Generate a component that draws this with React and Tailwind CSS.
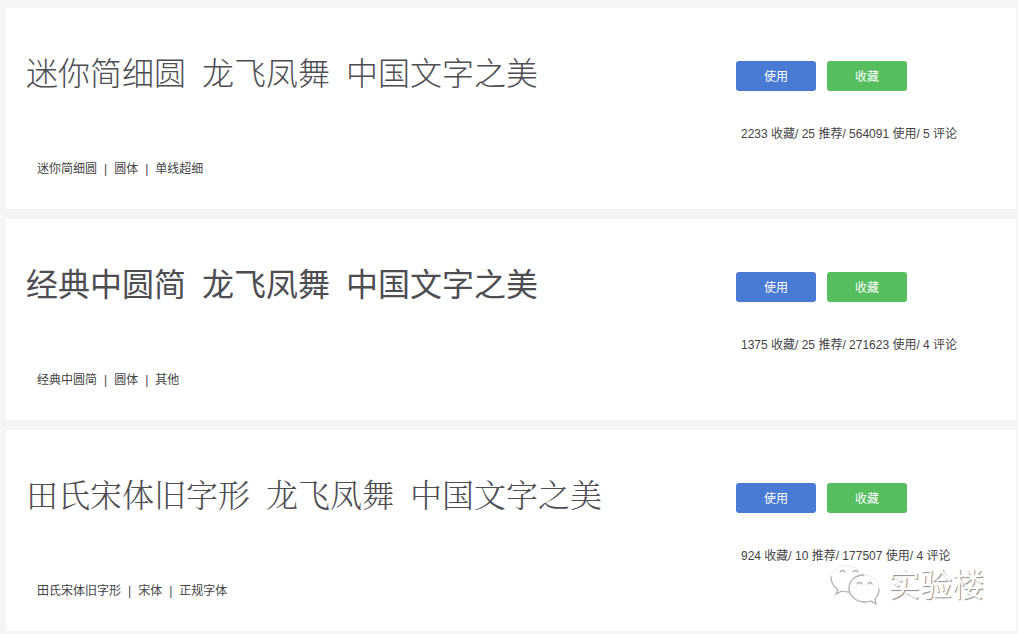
const fonts = [
  {
    name: '迷你简细圆',
    tags: ['圆体', '单线超细'],
    weight: 'font-light',
    stats: [['2233', '收藏'], ['25', '推荐'], ['564091', '使用'], ['5', '评论']],
  },
  {
    name: '经典中圆简',
    tags: ['圆体', '其他'],
    weight: 'font-normal',
    stats: [['1375', '收藏'], ['25', '推荐'], ['271623', '使用'], ['4', '评论']],
  },
  {
    name: '田氏宋体旧字形',
    tags: ['宋体', '正规字体'],
    weight: 'font-light font-["Liberation_Sans","Noto_Serif_CJK_SC","Noto_Sans_CJK_SC",serif]',
    stats: [['924', '收藏'], ['10', '推荐'], ['177507', '使用'], ['4', '评论']],
  },
];

function Watermark() {
  return (
    <div className="pointer-events-none absolute right-8 bottom-[26px] flex items-center gap-2">
      <svg className="h-10 w-[50px]" viewBox="0 0 50 40" fill="none" strokeLinecap="round" aria-hidden="true">
        <g stroke="#ececec" strokeWidth="1">
          <path d="M1 12C2 5 9 1 17 1s15 4 17 11" />
          <path d="M35 10c8 0 14 6 14 13" />
        </g>
        <g stroke="#b0b0b0" strokeWidth="1.3">
          <path d="M1 12c0 6 3 10 7 13l-2 4 6-3c3 1 5 1 7 1" />
          <path d="M34 10c-9 0-15 6-15 13 0 8 7 14 16 14 2 0 4 0 6-1l5 3-1-5c3-3 4-6 4-10" />
          <path d="M10 7c1-2 4-2 5 0M23 7c1-2 4-2 5 0M27 19c1-2 4-2 5 0M38 19c1-2 3-2 4 0" />
        </g>
      </svg>
      <span className="text-[32px] leading-10 text-white [text-shadow:1px_1px_1px_#8c8c8c]">实验楼</span>
    </div>
  );
}

function FontCard({ font, children }) {
  return (
    <article className="relative flex min-h-[201px] justify-between bg-white">
      <div className="flex flex-col items-start gap-[60px] pt-[46px] pl-5">
        <h2 className={`flex gap-4 text-[32px] leading-10 text-[#4d4d52] ${font.weight}`}>
          <span>{font.name}</span>
          <span>龙飞凤舞</span>
          <span>中国文字之美</span>
        </h2>
        <p className="flex gap-[7px] pl-[11px] text-xs leading-[30px] text-[#444]">
          <span>{font.name}</span>
          {font.tags.map((tag) => (
            <span key={tag} className="flex gap-[7px]">
              <span>|</span>
              <span>{tag}</span>
            </span>
          ))}
        </p>
      </div>
      <div className="w-[280px] shrink-0 pt-[53px]">
        <div className="flex gap-[11px]">
          <button type="button" className="h-[30px] w-20 rounded-[3px] bg-[#4a7bd4] pt-0.5 text-xs text-white">使用</button>
          <button type="button" className="h-[30px] w-20 rounded-[3px] bg-[#56be5e] pt-0.5 text-xs text-white">收藏</button>
        </div>
        <p className="mt-[33px] pl-[5px] text-xs leading-5 text-[#444]">
          {font.stats.map(([count, label]) => `${count} ${label}`).join('/ ')}
        </p>
      </div>
      {children}
    </article>
  );
}

export default function App() {
  return (
    <main className="flex min-h-screen flex-col gap-2.5 bg-[#f5f5f5] pt-2 pr-0.5 pb-[3px] pl-1.5 font-['Liberation_Sans','Noto_Sans_CJK_SC',sans-serif]">
      {fonts.map((font, i) => (
        <FontCard key={font.name} font={font}>
          {i === fonts.length - 1 && <Watermark />}
        </FontCard>
      ))}
    </main>
  );
}
